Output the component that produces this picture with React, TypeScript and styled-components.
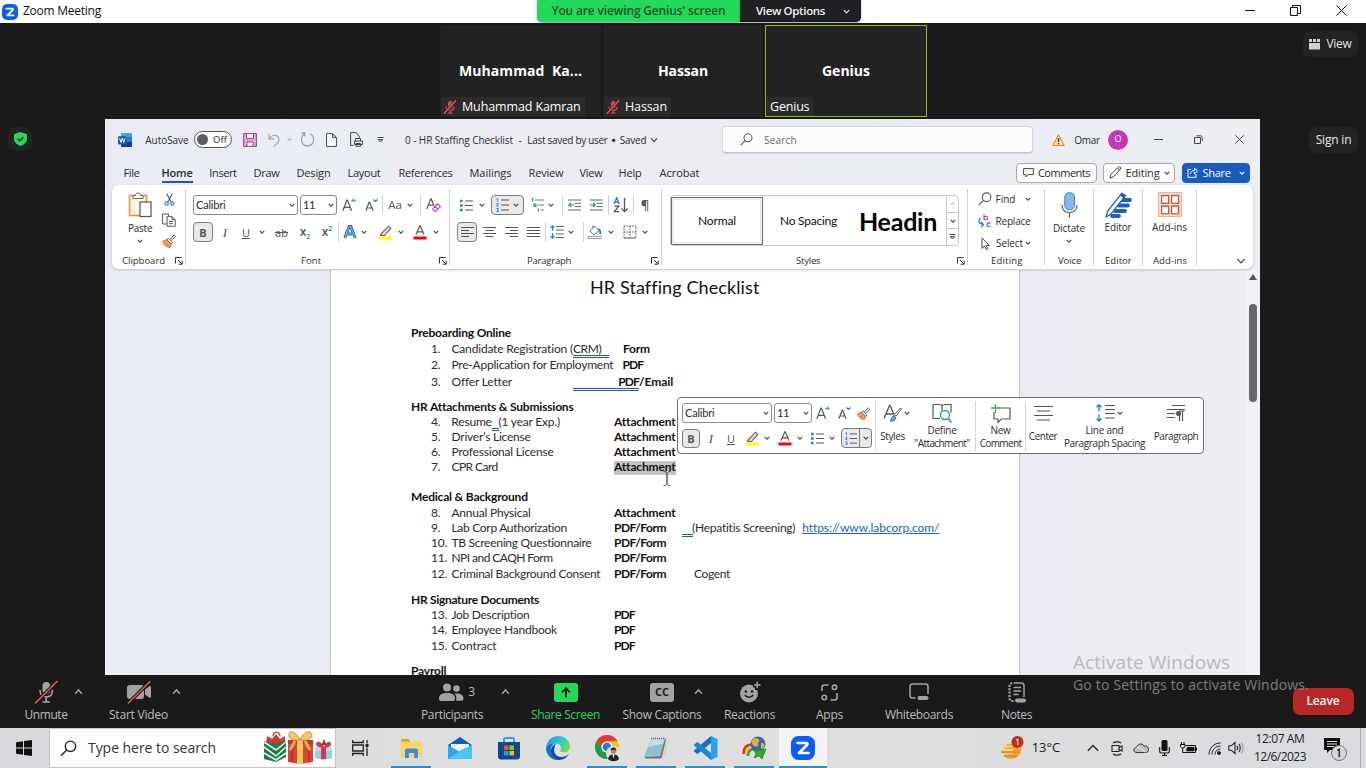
import React from "react";
import styled, { createGlobalStyle, css } from "styled-components";

const GlobalStyle = createGlobalStyle`
  * { box-sizing: border-box; }
  html, body { margin: 0; padding: 0; overflow: hidden; }
  body { font-family: "Open Sans", "Noto Sans", sans-serif; background: #1a1a1a; }
  svg { display: block; flex: none; }
`;

/* ---------- shared parts ---------- */

const Text = styled.span<{ $s?: number; $ls?: number; $b?: number; $c?: string }>`
  flex: none;
  white-space: pre;
  font-size: ${(p) => p.$s ?? 10}px;
  line-height: 1.2;
  letter-spacing: ${(p) => p.$ls ?? -0.2}px;
  font-weight: ${(p) => p.$b ?? 400};
  color: ${(p) => p.$c ?? "#2b2b2b"};
`;

const Doc = styled(Text)`
  font-family: Lato, "Open Sans", sans-serif;
`;

const Cell = styled.div<{ $w: number; $ml?: number }>`
  flex: none;
  display: flex;
  align-items: center;
  justify-content: center;
  width: ${(p) => p.$w}px;
  margin-left: ${(p) => p.$ml ?? 0}px;
`;

const Chev = ({ s = 6, c = "#444", up = false, w = 1.1 }: { s?: number; c?: string; up?: boolean; w?: number }) => (
  <svg width={s} height={s} viewBox="0 0 8 8" fill="none" stroke={c} strokeWidth={(w * 8) / s}>
    <path d={up ? "M1 6l3-3.4L7 6" : "M1 2.4l3 3.2 3-3.2"} />
  </svg>
);

const ZoomLogo = ({ s }: { s: number }) => (
  <svg width={s} height={s} viewBox="0 0 24 24">
    <rect width="24" height="24" rx="7.5" fill="#0b5cff" />
    <path d="M6.5 7h8.5c1.4 0 1.9 1 1 2l-8 8h9.5" fill="none" stroke="#fff" strokeWidth="2.7" strokeLinecap="round" strokeLinejoin="round" />
  </svg>
);

/* ---------- window title bar ---------- */

const Page = styled.div`
  position: relative;
  display: flex;
  flex-direction: column;
  width: 1366px;
  height: 768px;
  overflow: hidden;
`;

const TitleBar = styled.header`
  display: flex;
  height: 23px;
  flex: none;
  background: #fff;
`;

const TitleLeft = styled.div`
  display: flex;
  align-items: center;
  gap: 5px;
  width: 537px;
  padding: 0 0 0 2px;
`;

const SharePill = styled.div<{ $green?: boolean }>`
  display: flex;
  align-items: center;
  justify-content: center;
  gap: 18px;
  height: 22px;
  padding: ${(p) => (p.$green ? "1px 0 0 0" : "0 0 0 5px")};
  width: ${(p) => (p.$green ? 203 : 121)}px;
  background: ${(p) => (p.$green ? "#23d959" : "#1f2023")};
  border-radius: ${(p) => (p.$green ? "0 0 0 5px" : "0 0 5px 0")};
  box-shadow: 0 1px 2px rgba(0, 0, 0, 0.4);
`;

const WindowButtons = styled.div`
  display: flex;
  align-items: flex-start;
  gap: 35px;
  margin: 5px 0 0 auto;
  padding-right: 19px;
`;

/* ---------- meeting stage ---------- */

const Stage = styled.section`
  display: flex;
  flex-direction: column;
  flex: none;
  height: 652px;
  background: #1a1a1a;
`;

const Gallery = styled.div`
  display: flex;
  height: 96px;
  padding: 2px 8px 0 440px;
`;

const Tile = styled.div<{ $active?: boolean; $w: number; $mr?: number }>`
  display: flex;
  flex-direction: column;
  align-items: center;
  width: ${(p) => p.$w}px;
  height: 92px;
  margin-right: ${(p) => p.$mr ?? 0}px;
  background: #222;
  border: 1px solid ${(p) => (p.$active ? "#8cbf26" : "#202020")};
`;

const TileName = styled.div`
  height: 71px;
  padding-top: 33px;
`;

const TileLabel = styled.div`
  display: flex;
  align-items: center;
  align-self: flex-start;
  gap: 5px;
  height: 19px;
  padding: 0 4px 0 4px;
  background: #2b2b2b;
  & > svg { margin-left: -2px; }
`;

const DarkButton = styled.div<{ $w: number; $h: number; $ml?: string; $mt?: number }>`
  display: flex;
  align-items: center;
  justify-content: center;
  gap: 6px;
  width: ${(p) => p.$w}px;
  height: ${(p) => p.$h}px;
  margin: ${(p) => p.$mt ?? 0}px 0 0 ${(p) => p.$ml ?? "0"};
  background: #232323;
  border-radius: 7px;
`;

const StageMain = styled.div`
  display: flex;
  height: 556px;
`;

const Side = styled.div<{ $w: number }>`
  width: ${(p) => p.$w}px;
  flex: none;
`;

const MutedMic = () => (
  <svg width="14" height="14" viewBox="0 0 14 14">
    <rect x="5" y="1" width="4.6" height="7.6" rx="2.3" fill="#e0454a" />
    <path d="M3.2 6.6c0 2.6 1.8 3.9 4 3.9s4-1.3 4-3.9M7.2 10.5V13M4.8 13h4.8" fill="none" stroke="#e0454a" strokeWidth="1.2" />
    <path d="M13 .5L1 13.5" stroke="#2b2b2b" strokeWidth="2.6" />
    <path d="M13 .5L1 13.5" stroke="#f0565a" strokeWidth="1.3" />
  </svg>
);

/* ---------- Word window ---------- */

const Word = styled.main`
  display: flex;
  flex-direction: column;
  width: 1155px;
  height: 556px;
  flex: none;
  background: linear-gradient(90deg, #e9edf3, #ebecf2 45%, #e9edf2 75%, #eceef2);
  overflow: hidden;
`;

const WordBar = styled.div`
  display: flex;
  align-items: center;
  height: 41px;
  flex: none;
`;

const Toggle = styled.div`
  display: flex;
  align-items: center;
  gap: 5px;
  width: 38px;
  height: 17px;
  padding: 0 4px 0 2px;
  background: #fff;
  border: 1px solid #555;
  border-radius: 9px;
`;

const Knob = styled.i`
  width: 11px;
  height: 11px;
  border-radius: 50%;
  background: #605e62;
`;

const SearchBox = styled.div`
  display: flex;
  align-items: center;
  gap: 11px;
  width: 311px;
  height: 27px;
  margin-left: 63px;
  padding-left: 17px;
  background: #fcfcfd;
  border: 1px solid #d6d6dd;
  border-bottom-color: #c3c3ca;
  border-radius: 4px;
  box-shadow: 0 1px 1px rgba(0, 0, 0, 0.1);
`;

const Avatar = styled.div`
  display: flex;
  align-items: center;
  justify-content: center;
  width: 20px;
  height: 20px;
  margin-left: 8px;
  border-radius: 50%;
  background: #c239b3;
`;

const TabRow = styled.nav`
  display: flex;
  align-items: center;
  height: 25px;
  flex: none;
`;

const Tab = styled.div<{ $w: number; $on?: boolean }>`
  display: flex;
  align-items: center;
  justify-content: center;
  width: ${(p) => p.$w}px;
  height: 20px;
  flex: none;
  ${(p) => p.$on && css`
    border-bottom: 2px solid #185abd;
    padding-top: 2px;
  `}
`;

const RibbonButton = styled.div<{ $w: number; $ml?: number; $blue?: boolean }>`
  display: flex;
  align-items: center;
  justify-content: center;
  gap: 4px;
  flex: none;
  width: ${(p) => p.$w}px;
  height: 20px;
  margin-left: ${(p) => p.$ml ?? 0}px;
  border: 1px solid ${(p) => (p.$blue ? "#185abd" : "#a9a9ae")};
  border-radius: 4px;
  background: ${(p) => (p.$blue ? "#185abd" : "#fdfdfe")};
`;

const Ribbon = styled.div`
  display: flex;
  width: 1141px;
  height: 84px;
  flex: none;
  margin-left: 7px;
  position: relative;
  background: #fff;
  border-radius: 7px;
  box-shadow: 0 1px 3px rgba(60, 60, 80, 0.25);
`;

const Group = styled.div<{ $w: number; $last?: boolean }>`
  display: flex;
  flex-direction: column;
  flex: none;
  width: ${(p) => p.$w}px;
  height: 76px;
  margin-top: 4px;
  border-right: ${(p) => (p.$last ? 0 : 1)}px solid #d2d2d6;
`;

const GroupBody = styled.div<{ $pl?: number; $center?: boolean }>`
  display: flex;
  flex-direction: ${(p) => (p.$center ? "column" : "row")};
  align-items: ${(p) => (p.$center ? "center" : "flex-start")};
  height: 65px;
  flex: none;
  padding-left: ${(p) => p.$pl ?? 0}px;
`;

const GroupFoot = styled.div<{ $pl: number; $gap?: number }>`
  display: flex;
  align-items: center;
  gap: ${(p) => p.$gap ?? 0}px;
  height: 14px;
  flex: none;
  padding-left: ${(p) => p.$pl}px;
`;

const Rows = styled.div`
  display: flex;
  flex-direction: column;
  padding-top: 6px;
  gap: 7px;
`;

const Row = styled.div<{ $pl?: number; $h?: number }>`
  display: flex;
  align-items: center;
  height: ${(p) => p.$h ?? 20}px;
  padding-left: ${(p) => p.$pl ?? 0}px;
`;

const Combo = styled.div<{ $w: number; $ml?: number }>`
  display: flex;
  align-items: center;
  justify-content: space-between;
  flex: none;
  width: ${(p) => p.$w}px;
  height: 20px;
  margin-left: ${(p) => p.$ml ?? 0}px;
  padding: 0 2px;
  background: #fff;
  border: 1px solid #8a8a8e;
  border-radius: 3px;
`;

const Pressed = styled.div<{ $w: number; $ml?: number; $h?: number }>`
  display: flex;
  align-items: center;
  justify-content: space-evenly;
  flex: none;
  width: ${(p) => p.$w}px;
  height: ${(p) => p.$h ?? 20}px;
  margin-left: ${(p) => p.$ml ?? 0}px;
  background: #e9e9ea;
  border: 1px solid #7c7c80;
  border-radius: 4px;
`;

const Rule = styled.i<{ $h?: number; $c?: string }>`
  width: 1px;
  height: ${(p) => p.$h ?? 20}px;
  background: ${(p) => p.$c ?? "#d2d2d6"};
  flex: none;
`;

const IconColumn = styled.div<{ $gap: number; $pt?: number; $ml?: number }>`
  display: flex;
  flex-direction: column;
  align-items: center;
  gap: ${(p) => p.$gap}px;
  padding-top: ${(p) => p.$pt ?? 0}px;
  margin-left: ${(p) => p.$ml ?? 0}px;
`;

const StyleGallery = styled.div`
  display: flex;
  width: 289px;
  height: 51px;
  margin: 6px 0 0 8px;
  border: 1px solid #c6c6c9;
  border-radius: 4px;
  flex: none;
`;

const StyleItem = styled.div<{ $w: number; $on?: boolean; $pt?: number }>`
  display: flex;
  align-items: center;
  justify-content: center;
  width: ${(p) => p.$w}px;
  height: ${(p) => (p.$on ? 48 : 49)}px;
  padding-top: ${(p) => p.$pt ?? 0}px;
  flex: none;
  overflow: hidden;
  ${(p) => p.$on && css`
    border: 1px solid #6e6e70;
    box-shadow: inset 0 0 0 2px #ececec;
    margin-top: 0.5px;
  `}
`;

const GalleryScroll = styled.div`
  display: flex;
  flex-direction: column;
  width: 12px;
  margin-left: auto;
  border-left: 1px solid #c6c6c9;
  & > div { display: flex; align-items: center; justify-content: center; flex: 1; }
  & > div + div { border-top: 1px solid #c6c6c9; }
`;

const Launcher = () => (
  <svg width="8" height="8" viewBox="0 0 8 8" fill="none" stroke="#333" strokeWidth="1">
    <path d="M.5 6.5v-6h6M3 3l4 4M7.2 3.6v3.6H3.6" />
  </svg>
);

const WordLogo = () => (
  <svg width="14" height="14" viewBox="0 0 14 14">
    <rect x="3" y="0" width="11" height="14" rx="1" fill="#2b7cd3" />
    <rect x="3" y="0" width="11" height="4" rx="1" fill="#41a5ee" />
    <rect x="3" y="9" width="11" height="5" rx="1" fill="#103f91" />
    <rect x="0" y="3.2" width="8.6" height="8.2" rx=".8" fill="#185abd" />
    <path d="M1.6 5.2l1.3 4.2 1.4-4.2 1.4 4.2L7 5.2" fill="none" stroke="#fff" strokeWidth="1" />
  </svg>
);

const Paste = () => (
  <svg width="24" height="26" viewBox="0 0 24 26" fill="none">
    <rect x="1.5" y="3.5" width="17" height="20" fill="#fdf3e2" stroke="#e3963c" strokeWidth="1.6" />
    <path d="M5 6.500V3.600h2.400C7.800 1.600 8.800.8 10 .8s2.200.8 2.600 2.800H15v2.900z" fill="#fff" stroke="#666" />
    <rect x="12" y="10" width="11" height="14.500" fill="#fff" stroke="#555" strokeWidth="1.200" />
  </svg>
);

const Cut = () => (
  <svg width="11" height="13" viewBox="0 0 11 13" fill="none" strokeWidth="1.1">
    <path d="M2.500.5L7.600 9.500M8.500.5L3.400 9.500" stroke="#555" />
    <circle cx="2.600" cy="10.600" r="1.700" stroke="#2b88c8" />
    <circle cx="8.400" cy="10.600" r="1.700" stroke="#2b88c8" />
  </svg>
);

const Copy = () => (
  <svg width="14" height="14" viewBox="0 0 14 14" fill="#fff" stroke="#555" strokeWidth="1">
    <path d="M.6 1h6v10h-6z" />
    <path d="M5 3.600h5l3.200 3v6.700H5zM10 3.600v3h3.200M7 8.500h4M7 10.700h4" />
  </svg>
);

const Painter = ({ s = 14 }: { s?: number }) => (
  <svg width={s} height={s} viewBox="0 0 14 14" fill="none">
    <path d="M.8 7.200l4.700-2 4 4-1.500 4.300c-2-.2-3-.7-4-1.500l.6-1.500-1.700.7C1.800 10 1 8.600.8 7.200z" fill="#f7a04b" stroke="#dd6b1c" />
    <path d="M4.800 5.600l1.600-1.500 4.300 4.300L9.200 10zM8.300 5.200L12 .9l1.500 1.400-4 4" fill="#fff" stroke="#555" />
  </svg>
);

const lines = (ys: number[], x1: number, x2: number) => ys.map((y) => `M${x1} ${y}H${x2}`).join("");

const Bullets = ({ s = 13 }: { s?: number }) => (
  <svg width={s} height={s} viewBox="0 0 13 13">
    <path d={lines([2, 6.500, 11], 5, 13)} stroke="#555" strokeWidth="1" />
    <path d="M0 .7h2.600v2.600H0zM0 5.200h2.600v2.600H0zM0 9.700h2.600v2.600H0z" fill="#1e7fcf" />
  </svg>
);

const Numbering = ({ s = 13 }: { s?: number }) => (
  <svg width={s} height={s + 1} viewBox="0 0 13 14" fill="none">
    <path d={lines([2, 7, 12], 5, 13)} stroke="#555" />
    <path d="M.6 1L1.700.4v3.200M.4 5.600h2L.6 8h2M.4 10.400h2L1.200 12h1.200v1.600H.3" stroke="#1e7fcf" strokeWidth=".9" />
  </svg>
);

const Multilevel = () => (
  <svg width="13" height="14" viewBox="0 0 13 14" fill="none">
    <path d="M4 2h9M7 7h6M9.500 12H13" stroke="#777" />
    <path d="M.6 1L1.700.4v3.200M3 6h2v2.400H3zM7.200 10.500v3.200" stroke="#1e7fcf" strokeWidth="1.100" />
  </svg>
);

const Align = ({ kind, w = 13 }: { kind: "l" | "c" | "r" | "j"; w?: number }) => {
  const d = {
    l: "M0 1.500h13M0 4.500h8M0 7.500h13M0 10.500h8",
    c: "M0 1.500h13M2.500 4.500h8M0 7.500h13M2.500 10.500h8",
    r: "M0 1.500h13M5 4.500h8M0 7.500h13M5 10.500h8",
    j: "M0 1.500h13M0 4.500h13M0 7.500h13M0 10.500h13",
  }[kind];
  return <svg width={w} height={12} viewBox="0 0 13 12" stroke="#555" strokeWidth="1" fill="none"><path d={d} /></svg>;
};

const Indent = ({ out = false }: { out?: boolean }) => (
  <svg width="13" height="12" viewBox="0 0 13 12" fill="none">
    <path d="M0 1h13M6.500 4.300H13M6.500 7.600H13M0 11h13" stroke="#666" />
    <path d={out ? "M6 6H.8M3 3.800L.8 6 3 8.200" : "M0 6h5.200M3 3.800L5.200 6 3 8.200"} stroke="#1e7fcf" strokeWidth="1.200" />
  </svg>
);

const LineSpacing = ({ w = 14 }: { w?: number }) => (
  <svg width={w} height={w} viewBox="0 0 14 14" fill="none">
    <path d={lines([1.500, 5, 9, 12.500], 6, 14)} stroke="#666" />
    <path d="M2.500.8v5M.5 2.800l2-2 2 2M2.500 8v5M.5 11.200l2 2 2-2" stroke="#1e7fcf" strokeWidth="1.200" />
  </svg>
);

const Sort = () => (
  <svg width="16" height="16" viewBox="0 0 16 16" fill="none" strokeWidth="1.300">
    <path d="M1 7L3.700.8 6.400 7M2 5h3.500" stroke="#1e7fcf" />
    <path d="M1.400 9.200h4.400l-4.400 5.500h4.600M11.500 1v13.500M8.500 11.500l3 3 3-3" stroke="#555" />
  </svg>
);

const Highlighter = () => (
  <svg width="15" height="15" viewBox="0 0 15 15" fill="none">
    <path d="M3.500 8.500L10.500 1.200l2.300 2L6.500 10.500H3zM2 10.500l1.500-2" stroke="#666" strokeWidth="1.100" fill="#ddd" />
    <rect x=".5" y="11.500" width="13.500" height="3" fill="#ffff00" />
  </svg>
);

const FontColor = () => (
  <svg width="14" height="15" viewBox="0 0 14 15" fill="none">
    <path d="M3 9.500L6.800.8h.4L11 9.500M4.300 6.800h5.400" stroke="#555" strokeWidth="1.200" />
    <rect x=".5" y="11.500" width="13" height="3" fill="#ff0000" />
  </svg>
);

const PaintBucket = () => (
  <svg width="14" height="14" viewBox="0 0 14 14" fill="none" stroke="#666">
    <path d="M6.500 1L11 5.500 6 10 1.800 6zM5 3V.5" />
    <path d="M10.500 4c2 1 2 3 1.500 5" stroke="#1e6fb8" strokeWidth="1.600" />
    <rect x=".5" y="11.500" width="12.500" height="2" stroke="#999" />
  </svg>
);

const Borders = () => (
  <svg width="14" height="14" viewBox="0 0 14 14" fill="none" stroke="#555" strokeDasharray="1.500 1.200">
    <path d="M1 1h12v12M1 1v12M7 1v12M1 7h12" />
    <path d="M1 13h12" strokeDasharray="none" />
  </svg>
);

const Magnifier = ({ s = 14, c = "#555" }: { s?: number; c?: string }) => (
  <svg width={s} height={s} viewBox="0 0 14 14" fill="none" stroke={c} strokeWidth="1.100">
    <circle cx="8.600" cy="5.200" r="4.300" />
    <path d="M5.500 8.300L.8 13" />
  </svg>
);

const Replace = () => (
  <svg width="14" height="14" viewBox="0 0 14 14" fill="none" strokeWidth="1.200">
    <path d="M6 .5v5.300M6 4c0-2 3.800-2 3.800 0s-3.800 2.200-3.800 0" stroke="#b146c2" />
    <path d="M2.500 4C.2 6 .2 9.500 4.800 10.500M3 8l2.500 2.600L3 13M12.500 9.500c-1.500-1.300-3.500-.6-3.500 1.200s2 2.400 3.500 1.200" stroke="#1e7fcf" />
  </svg>
);

const Pointer = () => (
  <svg width="9" height="13" viewBox="0 0 9 13" fill="#fff" stroke="#444"><path d="M1 .9v10.500l2.500-2.400 1.600 3.400 1.500-.7L5.100 8.400h3.200z" /></svg>
);

const Mic = () => (
  <svg width="17" height="26" viewBox="0 0 17 26" fill="none">
    <rect x="3.800" y=".8" width="9.600" height="17" rx="4.200" fill="#86b9ea" stroke="#3b83c9" />
    <path d="M1 13c0 5 3 7.500 7.500 7.500S16 18 16 13M8.500 20.500v5" stroke="#555" strokeWidth="1.200" />
  </svg>
);

const EditorIcon = () => (
  <svg width="27" height="26" viewBox="0 0 27 26" fill="none">
    <path d="M17 8h8M14 13.500h9M10 19h10M7 24h7" stroke="#1f5fc0" strokeWidth="3.800" strokeLinecap="round" />
    <path d="M17 1.200l3.500 2.500L6.500 21.500 1.200 25l1.500-6z" fill="#fff" stroke="#1f5fc0" strokeWidth="1.300" />
    <path d="M17 1.200l3.500 2.500-2 2.500L15 3.600z" fill="#1f5fc0" />
  </svg>
);

const AddIns = () => (
  <svg width="24" height="25" viewBox="0 0 24 25" fill="none" stroke="#d8461c">
    <rect x=".8" y=".8" width="22.400" height="23.400" stroke="#eb8a70" />
    <path d="M3.500 3.500h7.200v7.800H3.500zM13.500 3.500h7.200v7.800h-7.200zM3.500 14h7.200v7.800H3.500zM13.500 14h7.200v7.800h-7.200z" strokeWidth="1.300" />
  </svg>
);

const Letter = styled.span<{ $s: number; $c?: string; $dec?: string; $i?: boolean; $b?: number }>`
  flex: none;
  font-size: ${(p) => p.$s}px;
  line-height: 1;
  color: ${(p) => p.$c ?? "#555"};
  text-decoration: ${(p) => p.$dec ?? "none"};
  font-style: ${(p) => (p.$i ? "italic" : "normal")};
  font-family: ${(p) => (p.$i ? '"Liberation Serif", serif' : "inherit")};
  font-weight: ${(p) => p.$b ?? 400};
  sub, sup { font-size: 7px; color: #1e7fcf; line-height: 0; }
`;

const Grow = ({ up = true }: { up?: boolean }) => (
  <svg width="14" height="14" viewBox="0 0 14 14" fill="none">
    <path d={up ? "M.8 12.800L5 2h.4l4.200 10.800M2.400 9.300h5.600" : "M1.800 12.800L5.200 4h.4L9 12.800M3.200 10h4.500"} stroke="#555" strokeWidth="1.200" />
    <path d={up ? "M9.500 3.500l2-2 2 2" : "M9.500 1.500l2 2 2-2"} stroke="#1e7fcf" strokeWidth="1.200" />
  </svg>
);

const ClearFormat = () => (
  <svg width="15" height="14" viewBox="0 0 15 14" fill="none">
    <path d="M.8 11L4.800.8h.4L8 8M2.400 7.200h4.500" stroke="#555" strokeWidth="1.200" />
    <path d="M7 10.300l4.500-4.500 3 2.600-4.600 4.700H8.700L7 11.500zM9 8.300l3 3" stroke="#b146c2" strokeWidth="1.100" />
  </svg>
);

const TextEffect = () => (
  <svg width="14" height="14" viewBox="0 0 14 14" fill="none">
    <path d="M1.800 13L6.200 1.500h1.600L12.200 13M3.500 9h7" stroke="#1e6fc6" strokeWidth="3" />
    <path d="M1.800 13L6.200 1.500h1.600L12.200 13M3.500 9h7" stroke="#9fd0f5" strokeWidth=".8" />
  </svg>
);

/* ---------- document ---------- */

const DocArea = styled.div`
  display: flex;
  height: 405px;
  margin-top: 1px;
  background: linear-gradient(90deg, #eceef5, #e7e9f2 30%, #eaebf2 80%, #eceef2);
`;

const Paper = styled.article`
  width: 690px;
  height: 406px;
  margin-left: 225px;
  flex: none;
  background: #fff;
  border-left: 1px solid #c2c4cb;
  border-right: 1px solid #c2c4cb;
  padding: 7px 0 0 80px;
`;

const DocTitle = styled.div`
  padding-left: 179px;
  height: 49px;
`;

const DocRow = styled.div<{ $mt?: number; $pl?: number }>`
  display: flex;
  align-items: center;
  height: 15px;
  margin-top: ${(p) => p.$mt ?? 0}px;
  padding-left: ${(p) => p.$pl ?? 0}px;
`;

const Col = styled.div<{ $w: number }>`
  display: flex;
  align-items: center;
  width: ${(p) => p.$w}px;
  flex: none;
  white-space: pre;
`;

const DoubleLine = styled.span<{ $w: number; $right?: boolean }>`
  display: flex;
  flex: none;
  align-items: center;
  justify-content: ${(p) => (p.$right ? "flex-end" : "flex-start")};
  width: ${(p) => p.$w}px;
  height: 16px;
  border-bottom: 3px double #1f55c4;
  padding-top: 3px;
`;

const Selected = styled.span`
  display: flex;
  background: #c3c3c3;
  height: 14px;
  align-items: center;
`;

const ScrollRail = styled.div`
  display: flex;
  flex-direction: column;
  align-items: center;
  gap: 24px;
  width: 14px;
  margin-left: auto;
  padding-top: 4px;
  background: #f0f1f5;
`;

const ScrollThumb = styled.div`
  width: 8px;
  height: 98px;
  border-radius: 4px;
  background: #66666b;
`;

type Item = { n: string; t: string; v: string; mt?: number; ls?: number; vls?: number; vw?: number; extra?: React.ReactNode };

const ListItem = ({ n, t, v, mt, ls = -0.23, vls = -0.16, vw = 162.5, extra }: Item) => (
  <DocRow $mt={mt} $pl={20}>
    <Col $w={20.500}><Doc $s={12} $ls={-0.2}>{n}.</Doc></Col>
    <Col $w={vw}><Doc $s={12} $ls={ls}>{t}</Doc></Col>
    <Doc $s={12} $b={700} $ls={vls} $c="#111">{v}</Doc>
    {extra}
  </DocRow>
);

const Heading = ({ t, mt, ls = -0.2 }: { t: string; mt?: number; ls?: number }) => (
  <DocRow $mt={mt}><Doc $s={12} $b={700} $ls={ls} $c="#111">{t}</Doc></DocRow>
);

/* ---------- floating mini toolbar ---------- */

const MiniBar = styled.div`
  position: absolute;
  left: 677px;
  top: 397px;
  display: flex;
  width: 527px;
  height: 57px;
  background: #fff;
  border: 1px solid #6d6d70;
  border-radius: 4px;
`;

const MiniFont = styled.div`
  display: flex;
  flex-direction: column;
  width: 197px;
  padding: 5px 0 0 4px;
  gap: 5px;
  flex: none;
`;

const MiniItem = styled.div<{ $w: number; $one?: boolean }>`
  display: flex;
  flex-direction: column;
  align-items: center;
  width: ${(p) => p.$w}px;
  flex: none;
  padding-top: 5px;
  & > span { line-height: 13px; }
  & > div + span { margin-top: ${(p) => (p.$one ? 7 : 1)}px; }
`;

const MiniIcon = styled.div<{ $pl?: number }>`
  display: flex;
  align-items: center;
  gap: 2px;
  height: 20px;
  padding-left: ${(p) => p.$pl ?? 0}px;
`;

const MiniRule = styled.i`
  width: 1px;
  height: 50px;
  margin-top: 3px;
  background: #d4d4d6;
`;

const IBeam = styled.svg`
  position: absolute;
  left: 663px;
  top: 471px;
`;

/* ---------- meeting controls ---------- */

const Controls = styled.div`
  display: flex;
  height: 53px;
  flex: none;
  background: #1a1a1a;
`;

const Control = styled.div<{ $w: number; $ml?: number }>`
  display: flex;
  flex-direction: column;
  align-items: center;
  flex: none;
  width: ${(p) => p.$w}px;
  margin-left: ${(p) => p.$ml ?? 0}px;
  padding-top: 5px;
`;

const ControlIcon = styled.div`
  display: flex;
  align-items: center;
  justify-content: center;
  height: 24px;
  margin-bottom: 4px;
`;

const ControlChev = styled.div<{ $ml?: number; $w: number }>`
  display: flex;
  justify-content: center;
  width: ${(p) => p.$w}px;
  margin-left: ${(p) => p.$ml ?? 0}px;
  padding-top: 12px;
  flex: none;
`;

const Tag = styled.div<{ $bg: string }>`
  display: flex;
  align-items: center;
  justify-content: center;
  width: 24px;
  height: 19px;
  border-radius: 3px;
  background: ${(p) => p.$bg};
`;

const Leave = styled.div`
  display: flex;
  align-items: center;
  justify-content: center;
  width: 61px;
  height: 27px;
  margin: 13px 0 0 258px;
  padding-right: 1px;
  border-radius: 7px;
  background: #b92626;
`;

const People = styled.div`
  display: flex;
  align-items: center;
  gap: 4px;
  padding-left: 10px;
`;

const Watermark = styled.div`
  position: absolute;
  left: 1073px;
  top: 651px;
  display: flex;
  flex-direction: column;
  gap: 3px;
`;

/* ---------- taskbar ---------- */

const Taskbar = styled.footer`
  display: flex;
  height: 40px;
  flex: none;
  background: linear-gradient(90deg, #d7d9dc, #dfdfe0 40%, #dcddde 75%, #d9dbdf);
`;

const TaskSearch = styled.div`
  display: flex;
  align-items: center;
  width: 287px;
  margin-left: 1px;
  padding-left: 10px;
  background: #fff;
  border: 1px solid #c4c4c6;
  flex: none;
`;

const TaskApp = styled.div<{ $run?: boolean; $on?: boolean }>`
  display: flex;
  align-items: center;
  justify-content: center;
  width: ${(p) => (p.$on ? 48 : 40)}px;
  height: 40px;
  margin-right: ${(p) => (p.$on ? 0 : 9)}px;
  flex: none;
  background: ${(p) => (p.$on ? "#f3f3f4" : "none")};
  border-top: 2px solid transparent;
  border-bottom: 2px solid ${(p) => (p.$run || p.$on ? "#2b8fcb" : "transparent")};
`;

const Clock = styled.div`
  display: flex;
  flex-direction: column;
  align-items: center;
  gap: 4px;
  width: 60px;
  margin-left: 5px;
  margin-right: -2px;
  padding-top: 4px;
`;

const Gifts = () => (
  <svg width="68" height="34" viewBox="0 0 68 34">
    <path d="M3 5l5 3 4-5 4 5 5-3v8H2z" fill="#cf3a33" />
    <path d="M9 5c1-5 6-5 7 0" stroke="#9a6b3a" fill="none" strokeWidth="1.500" />
    <path d="M0 10l12 3 10-3v16l-10 5L0 28z" fill="#1f7a50" />
    <path d="M0 16l12 9 10-9M0 11l12 8 10-8M0 22l12 7 10-7" fill="none" stroke="#e6f0e8" strokeWidth="1.600" />
    <path d="M24 9h25v6H24z" fill="#c9302a" />
    <path d="M24 13h25v18l-13 2-12-2z" fill="#dd4238" />
    <path d="M28 14v17M45 14v17" stroke="#b92b26" strokeWidth="1.500" />
    <path d="M33 9h6v24h-6z" fill="#f0c660" />
    <path d="M36 9c-4-9-12-11-11-4 0 3 5 5 11 4 6 1 11-1 12-4 0-7-9-5-12 4z" fill="#f1c965" stroke="#c99232" />
    <path d="M31 10l-5 9M41 10l5 9" stroke="#e5b34c" strokeWidth="3" />
    <path d="M51 18l17-1v10l-9 2-8-2z" fill="#9cc8ea" />
    <path d="M51 16h17v4H51z" fill="#b9dcf3" />
    <path d="M57 16h5v12h-5z" fill="#d33d3d" />
    <path d="M60 16c-3-7-8-6-8-3s4 4 8 3c4 1 7 0 7-3s-4-4-7 3z" fill="#d33d3d" />
    <path d="M57.500 14l2.500-6 2.500 6z" fill="#b02a2a" />
  </svg>
);

const Explorer = () => (
  <svg width="23" height="21" viewBox="0 0 23 21">
    <path d="M1 2.500C1 1.500 1.500 1 2.500 1h6l2 2.500V6H1z" fill="#dba325" />
    <rect x="1" y="3.800" width="21" height="15.500" rx="1" fill="#fcd462" />
    <path d="M5 20v-7.500c0-1.200.8-2 2-2h9c1.200 0 2 .8 2 2V20h-3.800v-5H8.800v5z" fill="#3a8ee0" />
  </svg>
);
const Mail = () => (
  <svg width="24" height="22" viewBox="0 0 24 22">
    <path d="M0 8L12 0l12 8v6H0z" fill="#0d5fb8" />
    <path d="M3 7h18v6l-9 5-9-5z" fill="#f3f3f3" />
    <path d="M0 8l12 7 12-7v14H0z" fill="#2aa8ee" />
    <path d="M0 22l14-9.500L24 8v14z" fill="#4cc4f7" />
  </svg>
);
const Store = () => (
  <svg width="24" height="23" viewBox="0 0 24 23">
    <path d="M7 6V2.500C7 1.500 7.500 1 8.500 1h7c1 0 1.500.5 1.500 1.500V6" fill="none" stroke="#29a8e8" strokeWidth="2" />
    <path d="M1 5h22v14.500a3 3 0 0 1-3 3H4a3 3 0 0 1-3-3z" fill="#16478a" />
    <path d="M7 8.500h4.500V13H7z" fill="#f1511b" /><path d="M12.500 8.500H17V13h-4.500z" fill="#80cc28" />
    <path d="M7 14h4.500v4.500H7z" fill="#00adef" /><path d="M12.500 14H17v4.500h-4.500z" fill="#fbbc09" />
  </svg>
);
const Edge = () => (
  <svg width="24" height="24" viewBox="0 0 24 24">
    <defs>
      <linearGradient id="edgeTop" x1="0" y1="0" x2="1" y2="0.500"><stop offset="0" stopColor="#1f95e0" /><stop offset=".6" stopColor="#2fc5d8" /><stop offset="1" stopColor="#6fdc56" /></linearGradient>
    </defs>
    <path d="M0 12C.5 5 5.500 0 12 0c7 0 12 5 12 10.500 0 4-3 6-6 6-2.500 0-4.500-1-3.500-2.500 2-3-1-6.500-5-6.500C5 7.500 1 9.500 0 12z" fill="url(#edgeTop)" />
    <path d="M0 12c1-3 5-5 9-4.500C6 8.500 4.500 11 5 15c.5 4 4 8 8.500 9C6 25 0 19 0 12z" fill="#1473c8" />
    <path d="M8.500 12c-1.500 5 2 9 7 9 3 0 5.500-1.200 7.500-3.200C20.500 22 17.500 24 13 24 8 23.500 4.500 18.500 5 14c.3-3 2-5 5-6.500-.8 1-1.200 2.500-1.500 4.500z" fill="#0c4f9e" />
  </svg>
);
const Chrome = () => (
  <svg width="27" height="27" viewBox="0 0 27 27">
    <circle cx="12" cy="12" r="12" fill="#fbc116" />
    <path d="M1.600 6A12 12 0 0 1 22.400 6L12 6.500 8 14z" fill="#e33b2e" />
    <path d="M1.600 6A12 12 0 0 0 12 24l5-8.500-8-1z" fill="#229a4a" />
    <circle cx="12" cy="12" r="5.600" fill="#fff" />
    <circle cx="12" cy="12" r="4.400" fill="#2f74e0" />
    <circle cx="18.500" cy="18.500" r="7.500" fill="#e4dcd6" />
    <path d="M13 24c1-4 3-4.500 5.500-4.500S23 20 24 24c-3 3-8 3-11 0z" fill="#20252f" />
    <path d="M17.500 19.500h2l-1 4z" fill="#fff" />
    <circle cx="18.500" cy="16" r="2.700" fill="#b77f5f" />
    <path d="M15.600 15.500c0-4 5.800-4 5.800 0-1.500-1.500-4.300-1.500-5.800 0z" fill="#1d1713" />
  </svg>
);
const Notepad = () => (
  <svg width="24" height="24" viewBox="0 0 24 24">
    <path d="M19 3l5 1-3 17-6 1z" fill="#d8d2c4" />
    <path d="M7 3l14-1-5 18-16 1z" fill="#8cc3cf" />
    <path d="M7 3l14-1-1.500 5.500L4.500 11z" fill="#bfe0e6" />
    <path d="M0 21l16-1 5-18 1 1-4.500 19.500L2 22.500z" fill="#77756e" />
    <path d="M7 2.500h14" stroke="#666" strokeWidth="1.500" strokeDasharray="1 1" />
  </svg>
);
const VSCode = () => (
  <svg width="25" height="24" viewBox="0 0 25 24">
    <path d="M18 0l6.500 3v18L18 24z" fill="#2aa3ef" />
    <path d="M18 0v7L4.500 18 1 15.500v-1z" fill="#0f74bd" />
    <path d="M18 24v-7L4.500 6 1 8.500v1z" fill="#1a86d2" />
  </svg>
);
const Idm = () => (
  <svg width="25" height="24" viewBox="0 0 25 24">
    <path d="M1.500 18c0-7 4-9.500 9-9.500" fill="none" stroke="#d8382c" strokeWidth="2.500" />
    <path d="M3.800 19c0-6 3-8 8-8" fill="none" stroke="#f0c52e" strokeWidth="2.500" />
    <path d="M6 20c0-5 3-7 7-7" fill="none" stroke="#3aa13e" strokeWidth="2.500" />
    <circle cx="16" cy="8" r="7.500" fill="#2f6bb6" />
    <path d="M11 3c3-2 5-1 6 1s-2 3-1 5-3 2-5 0-2-4 0-6zM19 7c2 0 4 1 3.500 3S20 14 19 12z" fill="#e2ad3a" />
    <path d="M11 13l3.500 1.500L24 13l-4 10-3-3-5 2 2-4z" fill="#2bab2e" stroke="#14701a" strokeWidth=".6" />
  </svg>
);

const labelC = "#bdbdbd";
const iconC = "#a3a3a3";

export default function App() {
  return (
    <>
      <GlobalStyle />
      <Page>
        <TitleBar>
          <TitleLeft>
            <ZoomLogo s={16} />
            <Text $s={12} $ls={-0.25} $c="#111">Zoom Meeting</Text>
          </TitleLeft>
          <SharePill $green><Text $s={12} $b={600} $ls={-0.17} $c="#1f5230">You are viewing Genius' screen</Text></SharePill>
          <SharePill>
            <Text $s={11.500} $b={600} $ls={-0.35} $c="#f2f2f2">View Options</Text>
            <Chev s={7} c="#ddd" w={1.300} />
          </SharePill>
          <WindowButtons>
            <svg width="11" height="11" viewBox="0 0 11 11" stroke="#111"><path d="M1 5.500h10" /></svg>
            <svg width="11" height="11" viewBox="0 0 11 11" stroke="#111" fill="none"><path d="M.5 2.500h7v8h-7zM2.500 2.500v-2h8v8h-3" /></svg>
            <svg width="11" height="11" viewBox="0 0 11 11" stroke="#111"><path d="M.5.5l10 10M10.500.5l-10 10" /></svg>
          </WindowButtons>
        </TitleBar>

        <Stage>
          <Gallery>
            <Tile $w={161} $mr={2}>
              <TileName><Text $s={14} $b={700} $ls={0.08} $c="#fff">Muhammad  Ka...</Text></TileName>
              <TileLabel><MutedMic /><Text $s={12.500} $ls={-0.12} $c="#fff">Muhammad Kamran</Text></TileLabel>
            </Tile>
            <Tile $w={160} $mr={2}>
              <TileName><Text $s={14} $b={700} $ls={-0.1} $c="#fff">Hassan</Text></TileName>
              <TileLabel><MutedMic /><Text $s={12.500} $ls={-0.12} $c="#fff">Hassan</Text></TileLabel>
            </Tile>
            <Tile $w={162} $active>
              <TileName><Text $s={14} $b={700} $ls={0} $c="#fff">Genius</Text></TileName>
              <TileLabel><Text $s={12.500} $ls={-0.2} $c="#fff">Genius</Text></TileLabel>
            </Tile>
            <DarkButton $w={55} $h={26} $ml="auto" $mt={6}>
              <svg width="11" height="11" viewBox="0 0 11 11" fill="#d0d0d0"><path d="M0 0h3v3H0zM4 0h3v3H4zM8 0h3v3H8zM0 4h11v6.500H0z" /></svg>
              <Text $s={12} $ls={-0.3} $c="#e6e6e6">View</Text>
            </DarkButton>
          </Gallery>

          <StageMain>
            <Side $w={105}>
              <DarkButton $w={24} $h={24} $ml="8px" $mt={8}>
                <svg width="13" height="14" viewBox="0 0 13 14">
                  <path d="M6.500 0L13 2.300v4.200C13 10 10.500 12.800 6.500 14 2.500 12.800 0 10 0 6.500V2.300z" fill="#23d959" />
                  <path d="M3.800 6.800l2 2 3.500-3.600" fill="none" stroke="#1f2a22" strokeWidth="1.500" />
                </svg>
              </DarkButton>
            </Side>

            <Word>
              <WordBar>
                <Cell $w={14} $ml={13}><WordLogo /></Cell>
                <Cell $w={44} $ml={13}><Text $ls={-0.05}>AutoSave</Text></Cell>
                <Cell $w={38} $ml={5}><Toggle><Knob /><Text $s={9.500} $ls={0}>Off</Text></Toggle></Cell>
                <Cell $w={14} $ml={11}>
                  <svg width="14" height="14" viewBox="0 0 14 14" fill="#e3a6e0" stroke="#a33aa0"><path d="M.6.600h12.800v12.800H.6z" /><path d="M3.500.6h7v5h-7zM4 13.400V9h6v4.400z" fill="#fff" /></svg>
                </Cell>
                <Cell $w={14} $ml={10}>
                  <svg width="13" height="14" viewBox="0 0 13 14" fill="none" stroke="#a3a5aa" strokeWidth="1.200"><path d="M1 .8v5h5M1.200 5.600C3 2.500 7.500 1.200 10 3.600c3 3-.5 6-4 10" /></svg>
                </Cell>
                <Cell $w={6} $ml={5}><Chev s={5} c="#b5b7bb" /></Cell>
                <Cell $w={15} $ml={8}>
                  <svg width="15" height="15" viewBox="0 0 15 15" fill="none" stroke="#9b9da2" strokeWidth="1.200"><path d="M1.200.8h3.500v3.500M4.500 1.800C0 4.500.5 13.800 7.500 13.800c7.200 0 8-9.600 2.500-12" /></svg>
                </Cell>
                <Cell $w={12} $ml={10}>
                  <svg width="11" height="14" viewBox="0 0 11 14" fill="#fff" stroke="#444"><path d="M.6.6h6l3.800 4v8.800H.6zM6.600.6v4h3.800" /></svg>
                </Cell>
                <Cell $w={13} $ml={13}>
                  <svg width="13" height="15" viewBox="0 0 13 15" fill="none" stroke="#444"><path d="M3.500 13.400H.6V.6h5.500l3.200 3.800V6M5.500 9V6.500h5V9M4.500 9h8v3.500h-8zM6 11.500h4.500v2.800H6z" /></svg>
                </Cell>
                <Cell $w={8} $ml={13}>
                  <svg width="7" height="6" viewBox="0 0 7 6" fill="none" stroke="#444"><path d="M.5.5h6M1.200 2.600h4.600L3.500 5z" /></svg>
                </Cell>
                <Cell $w={108} $ml={21}><Text $ls={-0.07}>0 - HR Staffing Checklist</Text></Cell>
                <Cell $w={14}><Text>-</Text></Cell>
                <Cell $w={81}><Text $ls={-0.3}>Last saved by user</Text></Cell>
                <Cell $w={11}><Text $s={11} $b={700}>•</Text></Cell>
                <Cell $w={28}><Text $ls={-0.25}>Saved</Text></Cell>
                <Cell $w={11} $ml={1}><Chev s={8} /></Cell>
                <SearchBox><Magnifier s={13} /><Text $ls={0.2} $c="#666">Search</Text></SearchBox>
                <Cell $w={14} $ml={18}>
                  <svg width="13" height="12" viewBox="0 0 13 12"><path d="M6.500.8l5.700 10.600H.8z" fill="#fbe0a8" stroke="#dd7a1e" /><path d="M6.500 4v4M6.500 9v1.200" stroke="#444" strokeWidth="1.400" /></svg>
                </Cell>
                <Cell $w={26} $ml={9}><Text $ls={-0.3}>Omar</Text></Cell>
                <Avatar><Text $s={9} $ls={0} $c="#fff">O</Text></Avatar>
                <Cell $w={9} $ml={26}><svg width="9" height="9" viewBox="0 0 9 9" stroke="#444"><path d="M0 4.500h9" /></svg></Cell>
                <Cell $w={9} $ml={31}><svg width="9" height="9" viewBox="0 0 9 9" stroke="#444" fill="none"><path d="M.5 2.500h6v6h-6zM2.500.8h4c1 0 1.800.8 1.800 1.800V6" /></svg></Cell>
                <Cell $w={10} $ml={31}><svg width="9" height="9" viewBox="0 0 9 9" stroke="#444"><path d="M.3.300l8.400 8.400M8.700.300L.3 8.700" /></svg></Cell>
              </WordBar>

              <TabRow>
                <Cell $w={17} $ml={18}><Text $s={11} $ls={-0.3}>File</Text></Cell>
                <Cell $w={32} $ml={21}><Tab $w={31} $on><Text $s={11} $b={600} $ls={-0.2}>Home</Text></Tab></Cell>
                <Cell $w={28} $ml={16}><Text $s={11} $ls={-0.4}>Insert</Text></Cell>
                <Cell $w={27} $ml={16}><Text $s={11} $ls={-0.25}>Draw</Text></Cell>
                <Cell $w={35} $ml={16}><Text $s={11} $ls={-0.15}>Design</Text></Cell>
                <Cell $w={34} $ml={16}><Text $s={11} $ls={-0.27}>Layout</Text></Cell>
                <Cell $w={55} $ml={17}><Text $s={11} $ls={-0.28}>References</Text></Cell>
                <Cell $w={43} $ml={16}><Text $s={11} $ls={-0.04}>Mailings</Text></Cell>
                <Cell $w={36} $ml={16}><Text $s={11} $ls={-0.16}>Review</Text></Cell>
                <Cell $w={24} $ml={15}><Text $s={11} $ls={-0.26}>View</Text></Cell>
                <Cell $w={24} $ml={15}><Text $s={11} $ls={-0.2}>Help</Text></Cell>
                <Cell $w={41} $ml={17}><Text $s={11} $ls={-0.01}>Acrobat</Text></Cell>
                <RibbonButton $w={81} $ml={316}>
                  <svg width="11" height="10" viewBox="0 0 11 10" fill="none" stroke="#444"><path d="M.6.6h9.800v6H5L3 9V6.600H.6z" /></svg>
                  <Text $s={11} $ls={-0.48}>Comments</Text>
                </RibbonButton>
                <RibbonButton $w={72} $ml={6}>
                  <svg width="13" height="13" viewBox="0 0 13 13" fill="none" stroke="#444"><path d="M1 12l.8-3.500L9.500 1c1.300-1 3 .8 2 2L4.200 11zM8.500 2l2.300 2.300" /></svg>
                  <Text $s={11} $ls={-0.15}>Editing</Text>
                  <Chev s={6} />
                </RibbonButton>
                <RibbonButton $w={68} $ml={7} $blue>
                  <svg width="11" height="11" viewBox="0 0 11 11" fill="none" stroke="#fff"><path d="M4 2.500H1v7.800h8V7M3.500 7c.3-2.500 2-3.500 4-3.500V1.200L10.500 4l-3 2.800V5" /></svg>
                  <Text $s={11} $ls={-0.3} $c="#fff">Share</Text>
                  <Cell $w={6} $ml={4}><Chev s={6} c="#fff" /></Cell>
                </RibbonButton>
              </TabRow>

              <Ribbon>
                <Group $w={74}>
                  <GroupBody $pl={16}>
                    <IconColumn $gap={4} $pt={3}>
                      <Paste />
                      <Text $ls={-0.25}>Paste</Text>
                      <Chev s={6} />
                    </IconColumn>
                    <IconColumn $gap={7} $pt={4} $ml={10}>
                      <Cut />
                      <Copy />
                      <Painter />
                    </IconColumn>
                  </GroupBody>
                  <GroupFoot $pl={10} $gap={10}><Text $s={9.500} $ls={0}>Clipboard</Text><Launcher /></GroupFoot>
                </Group>

                <Group $w={264}>
                  <GroupBody $pl={7}>
                    <Rows>
                      <Row>
                        <Combo $w={105}><Doc $s={11} $ls={-0.2}>Calibri</Doc><Chev s={6} /></Combo>
                        <Combo $w={37} $ml={2}><Doc $s={11} $ls={-0.4}>11</Doc><Chev s={6} /></Combo>
                        <Cell $w={24}><Grow /></Cell>
                        <Cell $w={20}><Grow up={false} /></Cell>
                        <Cell $w={2}><Rule /></Cell>
                        <Cell $w={24}><Letter $s={11.500}>Aa</Letter></Cell>
                        <Cell $w={6}><Chev s={6} /></Cell>
                        <Cell $w={14}><Rule /></Cell>
                        <Cell $w={12}><ClearFormat /></Cell>
                      </Row>
                      <Row>
                        <Pressed $w={20}><Letter $s={11} $b={700}>B</Letter></Pressed>
                        <Cell $w={24}><Letter $s={13} $i>I</Letter></Cell>
                        <Cell $w={18}><Letter $s={11} $dec="underline">U</Letter></Cell>
                        <Cell $w={14}><Chev s={6} /></Cell>
                        <Cell $w={25}><Letter $s={11} $dec="line-through">ab</Letter></Cell>
                        <Cell $w={22}><Letter $s={12} $b={600}>x<sub>2</sub></Letter></Cell>
                        <Cell $w={22}><Letter $s={12} $b={600}>x<sup>2</sup></Letter></Cell>
                        <Rule />
                        <Cell $w={22}><TextEffect /></Cell>
                        <Cell $w={6}><Chev s={6} /></Cell>
                        <Cell $w={21} $ml={8}><Highlighter /></Cell>
                        <Cell $w={10}><Chev s={6} /></Cell>
                        <Cell $w={28}><FontColor /></Cell>
                        <Cell $w={4}><Chev s={6} /></Cell>
                      </Row>
                    </Rows>
                  </GroupBody>
                  <GroupFoot $pl={115} $gap={118}><Text $s={9.500} $ls={0.1}>Font</Text><Launcher /></GroupFoot>
                </Group>

                <Group $w={212}>
                  <GroupBody $pl={6}>
                    <Rows>
                      <Row>
                        <Cell $w={21}><Bullets /></Cell>
                        <Cell $w={10}><Chev s={6} /></Cell>
                        <Pressed $w={33} $ml={4}><Numbering /><Chev s={6} /></Pressed>
                        <Cell $w={26}><Multilevel /></Cell>
                        <Cell $w={2}><Chev s={6} /></Cell>
                        <Cell $w={10} $ml={5}><Rule /></Cell>
                        <Cell $w={14}><Indent out /></Cell>
                        <Cell $w={14} $ml={8}><Indent /></Cell>
                        <Cell $w={10}><Rule /></Cell>
                        <Cell $w={15}><Sort /></Cell>
                        <Cell $w={10}><Rule /></Cell>
                        <Cell $w={14}><Letter $s={13} $b={600}>¶</Letter></Cell>
                      </Row>
                      <Row $pl={1}>
                        <Pressed $w={20}><Align kind="l" /></Pressed>
                        <Cell $w={24}><Align kind="c" /></Cell>
                        <Cell $w={20}><Align kind="r" /></Cell>
                        <Cell $w={24}><Align kind="j" /></Cell>
                        <Rule />
                        <Cell $w={22}><LineSpacing /></Cell>
                        <Cell $w={6}><Chev s={6} /></Cell>
                        <Cell $w={18}><Rule /></Cell>
                        <Cell $w={6}><PaintBucket /></Cell>
                        <Cell $w={10} $ml={8}><Chev s={6} /></Cell>
                        <Cell $w={27}><Borders /></Cell>
                        <Cell $w={4}><Chev s={6} /></Cell>
                      </Row>
                    </Rows>
                  </GroupBody>
                  <GroupFoot $pl={77} $gap={80}><Text $s={9.500} $ls={-0.22}>Paragraph</Text><Launcher /></GroupFoot>
                </Group>

                <Group $w={306}>
                  <GroupBody>
                    <StyleGallery>
                      <StyleItem $w={92} $on $pt={2}><Doc $s={12} $ls={-0.15} $c="#111">Normal</Doc></StyleItem>
                      <StyleItem $w={91} $pt={2}><Doc $s={12} $ls={-0.25} $c="#111">No Spacing</Doc></StyleItem>
                      <StyleItem $w={88}><Doc $s={25} $b={700} $ls={-0.26} $c="#000">Headin</Doc></StyleItem>
                      <GalleryScroll>
                        <div><Chev s={5} up c="#bbb" /></div>
                        <div><Chev s={6} /></div>
                        <div><svg width="7" height="6" viewBox="0 0 7 6" fill="none" stroke="#444"><path d="M.5.5h6M1.200 2.600h4.600L3.500 5z" /></svg></div>
                      </GalleryScroll>
                    </StyleGallery>
                  </GroupBody>
                  <GroupFoot $pl={134} $gap={137}><Text $s={9.500} $ls={-0.2}>Styles</Text><Launcher /></GroupFoot>
                </Group>

                <Group $w={77}>
                  <GroupBody $pl={10}>
                    <IconColumn $gap={8} $pt={3}>
                      <Row $h={14}><Cell $w={14}><Magnifier /></Cell><Cell $w={21} $ml={3}><Text $ls={0}>Find</Text></Cell><Cell $w={6} $ml={9}><Chev s={6} /></Cell></Row>
                      <Row $h={14}><Cell $w={14}><Replace /></Cell><Cell $w={36} $ml={3}><Text>Replace</Text></Cell></Row>
                      <Row $h={14}><Cell $w={14}><Pointer /></Cell><Cell $w={28} $ml={3}><Text $ls={-0.1}>Select</Text></Cell><Cell $w={6} $ml={1}><Chev s={6} /></Cell></Row>
                    </IconColumn>
                  </GroupBody>
                  <GroupFoot $pl={23}><Text $s={9.500} $ls={0.2}>Editing</Text></GroupFoot>
                </Group>

                <Group $w={49}>
                  <GroupBody $center><IconColumn $gap={4} $pt={3}><Mic /><Text $ls={-0.12}>Dictate</Text><Chev s={6} /></IconColumn></GroupBody>
                  <GroupFoot $pl={13}><Text $s={9.500} $ls={-0.1}>Voice</Text></GroupFoot>
                </Group>
                <Group $w={49}>
                  <GroupBody $center><IconColumn $gap={3} $pt={3}><EditorIcon /><Text $ls={-0.14}>Editor</Text></IconColumn></GroupBody>
                  <GroupFoot $pl={11}><Text $s={9.500} $ls={0.05}>Editor</Text></GroupFoot>
                </Group>
                <Group $w={54}>
                  <GroupBody $center><IconColumn $gap={4} $pt={3}><AddIns /><Text $ls={-0.03}>Add-ins</Text></IconColumn></GroupBody>
                  <GroupFoot $pl={10}><Text $s={9.500} $ls={0.1}>Add-ins</Text></GroupFoot>
                </Group>
                <Group $w={55} $last>
                  <GroupBody />
                  <GroupFoot $pl={39}><Chev s={10} /></GroupFoot>
                </Group>
              </Ribbon>

              <DocArea>
                <Paper>
                  <DocTitle><Doc $s={18} $ls={0.1} $c="#111">HR Staffing Checklist</Doc></DocTitle>
                  <Heading t="Preboarding Online" />
                  <DocRow $mt={1} $pl={20}>
                    <Col $w={20.500}><Doc $s={12}>1.</Doc></Col>
                    <Col $w={171.500}>
                      <Doc $s={12} $ls={-0.18}>Candidate Registration (</Doc>
                      <DoubleLine $w={36}><Doc $s={12} $ls={-0.4}>CRM)</Doc></DoubleLine>
                    </Col>
                    <Doc $s={12} $b={700} $ls={-0.17} $c="#111">Form</Doc>
                  </DocRow>
                  <ListItem n="2" t="Pre-Application for Employment" v="PDF" mt={1} vw={171} vls={-0.9} />
                  <DocRow $mt={2} $pl={20}>
                    <Col $w={20.500}><Doc $s={12}>3.</Doc></Col>
                    <Col $w={121.500}><Doc $s={12} $ls={-0.17}>Offer Letter</Doc></Col>
                    <DoubleLine $w={66} $right><Doc $s={12} $b={700} $ls={-0.9} $c="#111">PDF</Doc></DoubleLine>
                    <Doc $s={12} $b={700} $ls={-0.05} $c="#111">/Email</Doc>
                  </DocRow>
                  <Heading t="HR Attachments & Submissions" mt={10} />
                  <DocRow $pl={20}>
                    <Col $w={20.500}><Doc $s={12}>4.</Doc></Col>
                    <Col $w={162.500}>
                      <Cell $w={40}><Doc $s={12} $ls={-0.2}>Resume</Doc></Cell>
                      <DoubleLine $w={7} />
                      <Doc $s={12} $ls={-0.2}>(1 year Exp.)</Doc>
                    </Col>
                    <Doc $s={12} $b={700} $ls={-0.16} $c="#111">Attachment</Doc>
                  </DocRow>
                  <ListItem n="5" t="Driver’s License" v="Attachment" />
                  <ListItem n="6" t="Professional License" v="Attachment" ls={-0.2} />
                  <DocRow $pl={20}>
                    <Col $w={20.500}><Doc $s={12}>7.</Doc></Col>
                    <Col $w={162.500}><Doc $s={12} $ls={-0.55}>CPR Card</Doc></Col>
                    <Selected><Doc $s={12} $b={700} $ls={-0.16} $c="#111">Attachment</Doc></Selected>
                  </DocRow>
                  <Heading t="Medical & Background" mt={15} />
                  <ListItem n="8" t="Annual Physical" v="Attachment" mt={1} />
                  <ListItem n="9" t="Lab Corp Authorization" v="PDF/Form" ls={-0.3} vls={-0.5} extra={
                    <>
                      <Cell $w={9} $ml={17}><DoubleLine $w={11} /></Cell>
                      <Doc $s={12} $ls={-0.25}>(Hepatitis Screening)</Doc>
                      <Cell $w={137} $ml={7}><Doc as="u" $s={12} $ls={-0.06} $c="#1a62c4">https://www.labcorp.com/</Doc></Cell>
                    </>
                  } />
                  <ListItem n="10" t="TB Screening Questionnaire" v="PDF/Form" ls={-0.27} vls={-0.5} />
                  <ListItem n="11" t="NPI and CAQH Form" v="PDF/Form" ls={-0.55} vls={-0.5} />
                  <ListItem n="12" t="Criminal Background Consent" v="PDF/Form" mt={1} ls={-0.27} vls={-0.5}
                    extra={<Cell $w={36} $ml={28}><Doc $s={12} $ls={-0.34}>Cogent</Doc></Cell>} />
                  <Heading t="HR Signature Documents" mt={11} ls={-0.31} />
                  <ListItem n="13" t="Job Description" v="PDF" ls={-0.3} vls={-0.9} />
                  <ListItem n="14" t="Employee Handbook" v="PDF" vls={-0.9} />
                  <ListItem n="15" t="Contract" v="PDF" mt={1} ls={-0.11} vls={-0.9} />
                  <Heading t="Payroll" mt={10} />
                </Paper>
                <ScrollRail>
                  <svg width="8" height="6" viewBox="0 0 8 6"><path d="M4 0l4 6H0z" fill="#555" /></svg>
                  <ScrollThumb />
                </ScrollRail>
              </DocArea>
            </Word>

            <Side $w={106}>
              <DarkButton $w={49} $h={26} $ml="49px" $mt={8}><Text $s={12} $ls={-0.2} $c="#e6e6e6">Sign in</Text></DarkButton>
            </Side>
          </StageMain>
        </Stage>

        <Controls>
          <Control $w={52} $ml={20}>
            <ControlIcon>
              <svg width="24" height="24" viewBox="0 0 24 24" fill="none">
                <rect x="8.500" y="2" width="7.500" height="12" rx="3.700" fill={iconC} />
                <path d="M6 10c0 5 2.500 7 6.200 7s6.300-2 6.300-7M12.200 17v4.500M8.500 22h7.500" stroke={iconC} strokeWidth="1.600" />
                <path d="M23.500 1L1 23.500" stroke="#1a1a1a" strokeWidth="3.500" /><path d="M23.500 1L1 23.500" stroke="#f0565a" strokeWidth="1.400" />
              </svg>
            </ControlIcon>
            <Text $s={12} $ls={-0.43} $c={labelC}>Unmute</Text>
          </Control>
          <ControlChev $w={12}><Chev s={9} up c={iconC} w={1.400} /></ControlChev>
          <Control $w={67} $ml={21}>
            <ControlIcon>
              <svg width="26" height="24" viewBox="0 0 26 24" fill="none">
                <rect x="1" y="5" width="17" height="14" rx="3" fill={iconC} /><path d="M19 9.500l4-3c1-.8 2-.3 2 1v9c0 1.300-1 1.800-2 1l-4-3z" fill={iconC} />
                <path d="M24.500 1L2 23.500" stroke="#1a1a1a" strokeWidth="3.500" /><path d="M24.500 1L2 23.500" stroke="#f0565a" strokeWidth="1.400" />
              </svg>
            </ControlIcon>
            <Text $s={12} $ls={-0.21} $c={labelC}>Start Video</Text>
          </Control>
          <ControlChev $w={8}><Chev s={9} up c={iconC} w={1.400} /></ControlChev>
          <Control $w={72} $ml={236}>
            <ControlIcon>
              <People>
                <svg width="25" height="19" viewBox="0 0 25 19" fill={iconC}>
                  <circle cx="8" cy="4.500" r="4" /><path d="M0 15.500C0 11.500 3 10 8 10s8 1.500 8 5.500c0 2-1 2.500-2.500 2.500h-11C1 18 0 17.500 0 15.500z" />
                  <circle cx="17.500" cy="5.500" r="3.300" /><path d="M17 10.500c5 0 7.500 1.500 7.500 5 0 1.500-.8 2.300-2 2.300H17c.8-2.500.5-5-1.500-7.200z" />
                </svg>
                <Cell $w={8}><Text $s={12} $c={labelC}>3</Text></Cell>
              </People>
            </ControlIcon>
            <Text $s={12} $ls={-0.35} $c={labelC}>Participants</Text>
          </Control>
          <ControlChev $w={8} $ml={13}><Chev s={9} up c={iconC} w={1.400} /></ControlChev>
          <Control $w={81} $ml={16}>
            <ControlIcon>
              <Tag $bg="#23d959"><svg width="10" height="11" viewBox="0 0 10 11" fill="none" stroke="#1a1a1a" strokeWidth="1.800"><path d="M5 10.500V1.500M1 5.300l4-4 4 4" /></svg></Tag>
            </ControlIcon>
            <Text $s={12} $ls={-0.37} $c="#23d959">Share Screen</Text>
          </Control>
          <Control $w={88} $ml={12}>
            <ControlIcon><Tag $bg={iconC}><Text $s={11} $b={700} $ls={0} $c="#1a1a1a">CC</Text></Tag></ControlIcon>
            <Text $s={12} $ls={-0.29} $c={labelC}>Show Captions</Text>
          </Control>
          <ControlChev $w={8} $ml={-12}><Chev s={9} up c={iconC} w={1.400} /></ControlChev>
          <Control $w={61} $ml={17}>
            <ControlIcon>
              <svg width="22" height="22" viewBox="0 0 22 22" fill="none">
                <circle cx="10" cy="12.500" r="9" fill={iconC} />
                <path d="M14 4.500h8M18 0v9" stroke="#1a1a1a" strokeWidth="4" />
                <path d="M15 4h6.500M18.200.8v6.400" stroke={iconC} strokeWidth="1.500" />
                <circle cx="6.800" cy="10.500" r="1.200" fill="#1a1a1a" /><circle cx="13" cy="10.500" r="1.200" fill="#1a1a1a" />
                <path d="M6 14c1.500 3 6.500 3 8 0" stroke="#1a1a1a" strokeWidth="1.600" />
              </svg>
            </ControlIcon>
            <Text $s={12} $ls={-0.35} $c={labelC}>Reactions</Text>
          </Control>
          <Control $w={35} $ml={32}>
            <ControlIcon>
              <svg width="17" height="17" viewBox="0 0 17 17" fill="none" stroke={iconC} strokeWidth="1.600">
                <path d="M1 7V3.500C1 2 2 1 3.500 1H7.500M16 9v4.500c0 1.500-1 2.500-2.500 2.500H9.500" /><circle cx="13.500" cy="3.300" r="2.200" /><circle cx="3.300" cy="13.500" r="2.200" />
              </svg>
            </ControlIcon>
            <Text $s={12} $ls={-0.25} $c={labelC}>Apps</Text>
          </Control>
          <Control $w={78} $ml={33}>
            <ControlIcon>
              <svg width="20" height="18" viewBox="0 0 20 18" fill="none" stroke={iconC} strokeWidth="1.500">
                <path d="M6.500 15H3.500C2 15 1 14 1 12.500V3.500C1 2 2 1 3.500 1h13C18 1 19 2 19 3.500V11" /><rect x="8.500" y="13" width="11" height="4" rx="2" fill={iconC} stroke="none" />
              </svg>
            </ControlIcon>
            <Text $s={12} $ls={-0.33} $c={labelC}>Whiteboards</Text>
          </Control>
          <Control $w={37} $ml={40}>
            <ControlIcon>
              <svg width="19" height="21" viewBox="0 0 19 21" fill="none" stroke={iconC} strokeWidth="1.500">
                <path d="M6.500 1h8C16 1 17 2 17 3.500V15M6.500 5.500H14M6.500 9H14M6.500 12.500h5" /><path d="M6.500 19C4 19 2.500 18 2.500 16V4C2.500 2 4 1 6.500 1" strokeDasharray="2 1.300" strokeWidth="2.200" />
                <rect x="8" y="16.500" width="11" height="4" rx="2" fill={iconC} stroke="none" />
              </svg>
            </ControlIcon>
            <Text $s={12} $ls={-0.4} $c={labelC}>Notes</Text>
          </Control>
          <Leave><Text $s={12} $b={600} $ls={-0.1} $c="#fff">Leave</Text></Leave>
        </Controls>

        <Taskbar>
          <Cell $w={48}>
            <svg width="16" height="16" viewBox="0 0 16 16" fill="#111"><path d="M0 2.200l7-1v6.400H0zM8 1l8-1v7.600H8zM0 8.500h7v6.300l-7-1zM8 8.500h8V16l-8-1z" /></svg>
          </Cell>
          <TaskSearch>
            <Magnifier s={17} c="#222" />
            <Cell $w={128} $ml={11}><Text $s={14} $ls={-0.04} $c="#333">Type here to search</Text></Cell>
            <Cell $w={68} $ml={48}><Gifts /></Cell>
          </TaskSearch>
          <Cell $w={49}>
            <svg width="17" height="16" viewBox="0 0 17 16" fill="none" stroke="#222" strokeWidth="1.300"><path d="M.7 0v2.500h10.600V0M.7 16v-2.500h10.600V16M.7 5h10.600v6H.7zM15 0v3.500M15 7.500V16" /><path d="M13.500 4h3v3h-3z" fill="#222" stroke="none" /></svg>
          </Cell>
          <Cell $w={6} />
          <TaskApp $run><Explorer /></TaskApp>
          <TaskApp><Mail /></TaskApp>
          <TaskApp><Store /></TaskApp>
          <TaskApp><Edge /></TaskApp>
          <TaskApp $run><Cell $w={27} $ml={3}><Chrome /></Cell></TaskApp>
          <TaskApp $run><Notepad /></TaskApp>
          <TaskApp $run><VSCode /></TaskApp>
          <TaskApp $run><Idm /></TaskApp>
          <Cell $w={0} $ml={-4} />
          <TaskApp $on><ZoomLogo s={24} /></TaskApp>
          <Cell $w={26} $ml={172}>
            <svg width="25" height="25" viewBox="0 0 25 25">
              <path d="M4 13c2-6 8-8 11-5 4 0 7 3 6 8-2 5-6 7-10 7-3 0-5-1-6-2z" fill="#f6a52c" />
              <path d="M5 7h7M3 10.500h9M1 14h12M3 17.500h10" stroke="#fcd58c" strokeWidth="1.800" />
              <path d="M1 16h18M4 20h12" stroke="#ef8b1d" strokeWidth="1.800" />
              <circle cx="17.500" cy="6" r="6" fill="#c42b1c" />
              <path d="M16.200 4.300l1.600-1V9" fill="none" stroke="#fff" strokeWidth="1.100" />
            </svg>
          </Cell>
          <Cell $w={30} $ml={6}><Text $s={13} $ls={0} $c="#222">13°C</Text></Cell>
          <Cell $w={12} $ml={26}><svg width="12" height="8" viewBox="0 0 12 8" fill="none" stroke="#222" strokeWidth="1.300"><path d="M.8 6.800L6 1.500l5.200 5.300" /></svg></Cell>
          <Cell $w={14} $ml={11}>
            <svg width="12" height="15" viewBox="0 0 12 15" fill="none" stroke="#222" strokeWidth="1.100"><path d="M1 4.500h7v6H1zM8 6.500l3-1.500v5L8 8.500M2 2c2-1.500 6-1.500 8 0M2 13c2 1.500 6 1.500 8 0" /></svg>
          </Cell>
          <Cell $w={16} $ml={9}>
            <svg width="16" height="12" viewBox="0 0 16 12" fill="#bfc1c3" stroke="#333"><path d="M4 10.500C-.5 10.500 0 5.500 3.500 5.500 4 2 9 .5 11 4c3-.5 4.500 1.500 4.500 3.500s-1 3-3 3z" /><path d="M3.500 5.500c2-.5 5 1 8.500 5" fill="none" stroke="#eee" /></svg>
          </Cell>
          <Cell $w={12} $ml={9}>
            <svg width="11" height="16" viewBox="0 0 11 16"><rect x="2.500" y="0" width="6" height="11" rx="1.500" fill="#111" /><path d="M.7 7v4.500c0 1 .5 1.500 1.500 1.500h6.600c1 0 1.500-.5 1.500-1.500V7M5.500 13v2.500M3 15.500h5" fill="none" stroke="#111" strokeWidth="1.100" /></svg>
          </Cell>
          <Cell $w={17} $ml={10}>
            <svg width="17" height="13" viewBox="0 0 17 13" fill="none" stroke="#111"><path d="M5.500 3.500h10v7h-10M16.500 5.500v3" /><path d="M7.500 5.300h6.500v3.500H6.500z" fill="#111" /><path d="M1.500 0v2.500M4 0v2.500M.5 2.500h4.500v2.300c-.6 1.500-3.900 1.500-4.500 0zM2.700 6v4.500h3" /></svg>
          </Cell>
          <Cell $w={14} $ml={10}>
            <svg width="13" height="13" viewBox="0 0 13 13" fill="none" stroke="#222"><path d="M1 12.500C1 6 6 1 12.500 1M4 12.500c0-5 3.500-8.500 8.500-8.500M7 12.500C7 9.300 9.300 7 12.500 7" /><circle cx="11" cy="11" r="1.500" fill="#222" /></svg>
          </Cell>
          <Cell $w={17} $ml={7}>
            <svg width="17" height="14" viewBox="0 0 17 14" fill="none" stroke="#222" strokeWidth="1.100"><path d="M.8 4.800h2.400L7 1.500v11L3.200 9.200H.8zM9 5c.8 1 .8 3 0 4M11 3.200c1.700 2 1.700 5.600 0 7.600" /><path d="M13.200 1.500c2.700 3 2.700 8 0 11" stroke="#999" /></svg>
          </Cell>
          <Clock>
            <Text $s={12} $ls={-0.39} $c="#1c1c1c">12:07 AM</Text>
            <Text $s={12} $ls={-0.54} $c="#1c1c1c">12/6/2023</Text>
          </Clock>
          <Cell $w={26} $ml={15}>
            <svg width="26" height="26" viewBox="0 0 26 26">
              <path d="M1 3h16v12H7l-3 3v-3H1z" fill="#111" /><path d="M4 6.500h10M4 9h10M4 11.500h7" stroke="#ddd" strokeWidth="1" />
              <circle cx="16" cy="18" r="7.500" fill="#d6d7da" stroke="#777" /><path d="M14.200 15.500l2-1.300v8" fill="none" stroke="#222" strokeWidth="1.400" />
            </svg>
          </Cell>
          <Cell $w={1} $ml={11}><Rule $h={40} $c="#aeb0b4" /></Cell>
        </Taskbar>

        <MiniBar>
          <MiniFont>
            <Row>
              <Combo $w={90}><Doc $s={11} $ls={-0.2}>Calibri</Doc><Chev s={6} /></Combo>
              <Combo $w={38} $ml={2}><Doc $s={11} $ls={-0.4}>11</Doc><Chev s={6} /></Combo>
              <Cell $w={22}><Grow /></Cell>
              <Cell $w={20}><Grow up={false} /></Cell>
              <Cell $w={18}><Painter s={13} /></Cell>
            </Row>
            <Row>
              <Pressed $w={18} $h={19}><Letter $s={11} $b={700}>B</Letter></Pressed>
              <Cell $w={22}><Letter $s={13} $i>I</Letter></Cell>
              <Cell $w={18}><Letter $s={11} $dec="underline">U</Letter></Cell>
              <Cell $w={24}><Highlighter /></Cell>
              <Cell $w={6}><Chev s={6} /></Cell>
              <Cell $w={30}><FontColor /></Cell>
              <Cell $w={4} $ml={-2}><Chev s={6} /></Cell>
              <Cell $w={30}><Bullets /></Cell>
              <Cell $w={4} $ml={-2}><Chev s={6} /></Cell>
              <Pressed $w={31} $ml={7}><Numbering s={12} /><Rule $h={18} $c="#7c7c80" /><Chev s={6} /></Pressed>
            </Row>
          </MiniFont>
          <MiniRule />
          <MiniItem $w={33} $one>
            <MiniIcon $pl={8}>
              <svg width="19" height="18" viewBox="0 0 19 18" fill="none">
                <path d="M1 14.500L6.500 1.500h.5l4 9M3 10h7" stroke="#555" strokeWidth="1.300" />
                <path d="M17.500 4l-6 6.500 1.500 1.500 5.500-7z" fill="#fff" stroke="#555" />
                <path d="M7 17c1.500-.5 1.500-5 4-5.500l2 2C12.500 16.500 9.500 17.500 7 17z" fill="#5aa5e6" stroke="#1e6fc6" />
              </svg>
              <Chev s={6} />
            </MiniIcon>
            <Text $ls={-0.4}>Styles</Text>
          </MiniItem>
          <MiniItem $w={66}>
            <MiniIcon>
              <svg width="20" height="20" viewBox="0 0 20 20" fill="none">
                <path d="M1 1.500h6c1.500 0 3 .8 3 2 0-1.200 1.500-2 3-2h6v8M1 1.500v14h7M10 3.500v4" stroke="#555" strokeWidth="1.200" />
                <circle cx="13" cy="12" r="4.500" stroke="#2b88c8" strokeWidth="1.300" fill="#fff" /><path d="M16 15.500l3.500 4" stroke="#2b88c8" strokeWidth="1.400" />
              </svg>
            </MiniIcon>
            <Text $ls={-0.25}>Define</Text>
            <Text $ls={-0.6}>"Attachment"</Text>
          </MiniItem>
          <MiniRule />
          <MiniItem $w={49}>
            <MiniIcon>
              <svg width="20" height="19" viewBox="0 0 20 19" fill="none">
                <path d="M8 4h11v11h-8.500L7 18.500V15H3V8" stroke="#555" strokeWidth="1.200" /><path d="M0 4h9M4.500 0v9" stroke="#3ea65c" strokeWidth="1.300" />
              </svg>
            </MiniIcon>
            <Text $ls={-0.3}>New</Text>
            <Text $ls={-0.65}>Comment</Text>
          </MiniItem>
          <MiniRule />
          <MiniItem $w={34} $one>
            <MiniIcon>
              <svg width="19" height="17" viewBox="0 0 19 17" stroke="#555" strokeWidth="1.200"><path d="M0 1.500h19M3 6h13M0 10.500h19M3 15h13" /></svg>
            </MiniIcon>
            <Text $ls={-0.5}>Center</Text>
          </MiniItem>
          <MiniItem $w={89}>
            <MiniIcon $pl={9}>
              <svg width="19" height="18" viewBox="0 0 19 18" fill="none">
                <path d="M9 1.500h10M9 5.500h10M9 9.500h10M9 14h10" stroke="#555" strokeWidth="1.100" />
                <path d="M3 .8v6.500M.5 3.300L3 .8l2.500 2.500M3 10.500V17M.5 14.500L3 17l2.500-2.500" stroke="#1e7fcf" strokeWidth="1.300" />
              </svg>
              <Chev s={6} />
            </MiniIcon>
            <Text $ls={-0.24}>Line and</Text>
            <Text $ls={-0.36}>Paragraph Spacing</Text>
          </MiniItem>
          <MiniItem $w={54} $one>
            <MiniIcon>
              <svg width="18" height="18" viewBox="0 0 18 18" fill="none" stroke="#555" strokeWidth="1.200">
                <path d="M5 1.500h13M0 5.500h18M0 9.500h8M0 13.500h8M12.500 7v10M15.500 7v10M17.500 7h-5" /><circle cx="11.500" cy="9.500" r="2.500" fill="#555" stroke="none" />
              </svg>
            </MiniIcon>
            <Text $ls={-0.45}>Paragraph</Text>
          </MiniItem>
        </MiniBar>

        <IBeam width="8" height="15" viewBox="0 0 8 15" fill="none" stroke="#555"><path d="M.5.500C3 .5 4 1.200 4 2.500v10c0 1.300-1 2-3.500 2M7.500.500C5 .5 4 1.200 4 2.500v10c0 1.300 1 2 3.500 2" /></IBeam>

        <Watermark>
          <Text $s={19} $ls={0.07} $c="#b9babd">Activate Windows</Text>
          <Text $s={14} $ls={0.19} $c="#7b7b7b">Go to Settings to activate Windows.</Text>
        </Watermark>
      </Page>
    </>
  );
}
